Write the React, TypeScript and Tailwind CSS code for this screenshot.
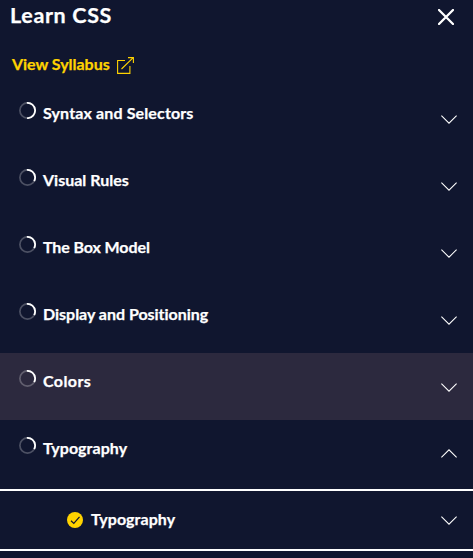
type RowProps = {
  title: string;
  progress: number;
  tracking: string;
  active?: boolean;
  open?: boolean;
};

const CIRCUMFERENCE = 2 * Math.PI * 7.6;

function ProgressRing({ progress }: { progress: number }) {
  return (
    <svg className="mt-[17px] size-[17px] shrink-0" viewBox="0 0 17 17" fill="none">
      <circle cx="8.5" cy="8.5" r="7.6" stroke="#fff" strokeOpacity="0.25" strokeWidth="1.7" />
      <circle
        cx="8.5"
        cy="8.5"
        r="7.6"
        stroke="#fff"
        strokeWidth="1.8"
        strokeDasharray={`${CIRCUMFERENCE * progress} ${CIRCUMFERENCE}`}
        transform="rotate(-95 8.5 8.5)"
      />
    </svg>
  );
}

function Chevron({ up = false }: { up?: boolean }) {
  return (
    <svg className="h-[9px] w-4 shrink-0" viewBox="0 0 16 9" fill="none" stroke="#fff" strokeWidth="1.05">
      <path d={up ? 'M.4 8.3 8 .8l7.6 7.5' : 'M.4.7 8 8.2 15.6.7'} />
    </svg>
  );
}

function ModuleRow({ title, progress, tracking, active, open }: RowProps) {
  return (
    <button className={`flex h-[67px] w-full shrink-0 items-start pr-4 pl-[19px] text-left ${active ? 'bg-[#2c293e]' : ''}`}>
      <ProgressRing progress={progress} />
      <span className={`mt-[17px] ml-[7px] grow text-base leading-[22px] font-bold whitespace-nowrap ${tracking}`}>{title}</span>
      <span className={`flex ${open ? 'mt-[29px]' : 'mt-[30px]'}`}>
        <Chevron up={open} />
      </span>
    </button>
  );
}

export default function App() {
  return (
    <main className="flex h-[558px] w-[473px] flex-col overflow-hidden bg-[#10162f] font-['Lato',sans-serif] text-white [-webkit-text-stroke:0.25px_currentColor] [font-variant-ligatures:none]">
      <header className="flex h-[51px] shrink-0 items-start justify-between pr-[19px] pl-[10px]">
        <h1 className="mt-[1px] text-[21.5px] leading-7 font-bold tracking-[0.65px]">Learn CSS</h1>
        <svg className="mt-[9px] size-4" viewBox="0 0 16 16" fill="none" stroke="#fff" strokeWidth="2.3" strokeLinecap="round">
          <path d="m1 1 14 14M15 1 1 15" />
        </svg>
      </header>
      <a className="flex h-[34px] shrink-0 items-start pl-3 text-[#ffd300]">
        <span className="mt-[2px] text-base leading-[22px] font-bold tracking-[-0.03px]">View Syllabus</span>
        <svg className="mt-[6px] ml-[7px] size-[17px]" viewBox="0 0 17 17" fill="none" stroke="currentColor" strokeWidth="1.1">
          <path d="M8 3.5H.6v12.9h12.3V9M4.5 12 16.2.7M11 .6h5.4V6" />
        </svg>
      </a>
      <ModuleRow title="Syntax and Selectors" progress={0.52} tracking="tracking-[0.14px]" />
      <ModuleRow title="Visual Rules" progress={0.34} tracking="tracking-[0px]" />
      <ModuleRow title="The Box Model" progress={0.34} tracking="tracking-[-0.1px]" />
      <ModuleRow title="Display and Positioning" progress={0.34} tracking="tracking-[-0.02px]" />
      <ModuleRow title="Colors" progress={0.34} tracking="tracking-[0.4px]" active />
      <ModuleRow title="Typography" progress={0.34} tracking="tracking-[0.05px]" open />
      <section className="mt-[2px] flex h-[62px] shrink-0 items-center border-y-2 border-white pr-4 pl-[67px]">
        <svg className="size-4 shrink-0" viewBox="0 0 16 16" fill="none">
          <circle cx="8" cy="8" r="8" fill="#ffd300" />
          <path d="m4 8.7 2.8 2.7 5.7-6.6" stroke="#10162f" strokeWidth="1.2" />
        </svg>
        <span className="-mt-[2px] ml-2 grow text-base leading-[22px] font-bold tracking-[0.05px]">Typography</span>
        <Chevron />
      </section>
    </main>
  );
}
